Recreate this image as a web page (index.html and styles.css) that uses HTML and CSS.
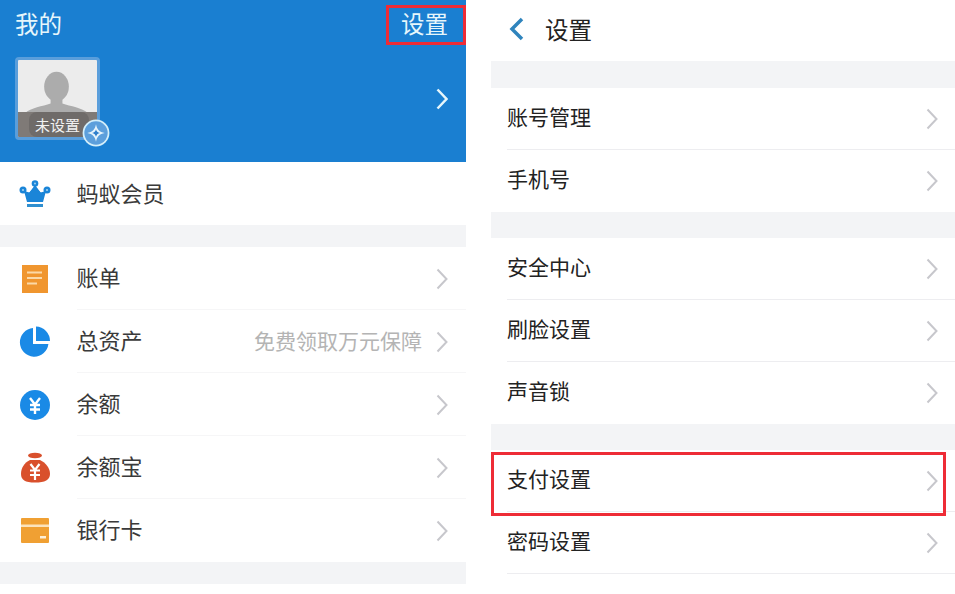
FILE: index.html
```html
<!DOCTYPE html>
<html lang="zh-CN">
  <head>
    <meta charset="UTF-8" />
    <meta name="viewport" content="width=device-width, initial-scale=1.0" />
    <title>我的 - 设置</title>
    <link rel="stylesheet" href="styles.css">
  </head>

  <body>
    <div class="pagina">
      <!-- Tela esquerda -->
      <section class="tela tela-minha">
        <header class="topo-azul">
          <div class="topo-linha">
            <span class="topo-titulo">我的</span>
            <span class="topo-link">设置</span>
          </div>
          <div class="perfil">
            <div class="avatar">
              <svg class="avatar-pessoa" viewBox="0 0 80 78">
                <ellipse cx="39" cy="27" rx="12.500" ry="15" fill="#acacac" />
                <path d="M33 38h12v6c8 3 20 4 26 10v24H7V54c6-6 18-7 26-10z" fill="#acacac" />
              </svg>
              <span class="avatar-faixa"><span class="avatar-texto">未设置</span></span>
            </div>
            <span class="selo">
              <svg viewBox="0 0 24 24" width="24" height="24">
                <circle cx="12" cy="12" r="11.500" fill="#d4effa" />
                <circle cx="12" cy="12" r="10" fill="#5c9fdc" />
                <path d="M12 4.500c.8 4.400 3 6.700 7.500 7.500-4.500.8-6.700 3-7.500 7.500-.8-4.500-3-6.700-7.500-7.500 4.500-.8 6.700-3 7.500-7.500z" fill="#e8f5fc" />
                <path d="M12 8.700c.4 1.800 1.500 2.900 3.300 3.300-1.800.4-2.900 1.500-3.300 3.300-.4-1.800-1.500-2.900-3.300-3.300 1.800-.4 2.900-1.500 3.300-3.300z" fill="#2f7fcc" />
              </svg>
            </span>
            <svg class="seta seta-branca" viewBox="0 0 12 22" width="12" height="22">
              <path d="M1.500 1.500l9 9.500-9 9.500" />
            </svg>
          </div>
        </header>

        <div class="linha linha-icone linha-membro">
          <svg class="icone" viewBox="0 0 32 28" width="32" height="28">
            <path d="M5 11l5.500 1.500L16 5l5.500 7.500L27 11l-3 11H8z" fill="#1a85d8" />
            <path d="M9.500 13.500L16 6l6.500 7.500L21 22H11z" fill="#1a85d8" />
            <circle cx="16" cy="3.500" r="3.300" fill="#1a85d8" />
            <circle cx="4" cy="10" r="3.500" fill="#1a85d8" />
            <circle cx="28" cy="10" r="3.500" fill="#1a85d8" />
            <circle cx="16" cy="3.500" r="1" fill="#9fd0f0" />
            <circle cx="4" cy="10" r="1.100" fill="#9fd0f0" />
            <circle cx="28" cy="10" r="1.100" fill="#9fd0f0" />
            <rect x="8" y="24" width="16" height="3" fill="#2f8fd0" />
          </svg>
          <span class="rotulo">蚂蚁会员</span>
        </div>

        <div class="faixa"></div>

        <div class="linha linha-icone com-borda">
          <svg class="icone" viewBox="0 0 32 32" width="32" height="32">
            <rect x="3" y="2" width="26" height="28" fill="#f0962f" />
            <path d="M8 9.500h15M8 15h15M8 20.500h10" stroke="#fbd9a8" stroke-width="2" />
          </svg>
          <span class="rotulo">账单</span>
          <svg class="seta" viewBox="0 0 12 22" width="12" height="22"><path d="M1.500 1.500l9 9.500-9 9.500" /></svg>
        </div>
        <div class="linha linha-icone com-borda">
          <svg class="icone" viewBox="0 0 32 32" width="32" height="32">
            <path d="M14 2.100A14.300 14.300 0 1 0 29.400 18H14z" fill="#1a8ae6" />
            <path d="M17 .5A14.500 14.500 0 0 1 31 15H17z" fill="#1a8ae6" />
          </svg>
          <span class="rotulo">总资产</span>
          <span class="dica">免费领取万元保障</span>
          <svg class="seta" viewBox="0 0 12 22" width="12" height="22"><path d="M1.500 1.500l9 9.500-9 9.500" /></svg>
        </div>
        <div class="linha linha-icone com-borda">
          <svg class="icone" viewBox="0 0 32 32" width="32" height="32">
            <circle cx="16" cy="16" r="15" fill="#1a8ae6" />
            <path d="M11 9l5 6.500L21 9M11 16h10M11 20.500h10M16 15.500V25" stroke="#fff" stroke-width="2.400" fill="none" />
          </svg>
          <span class="rotulo">余额</span>
          <svg class="seta" viewBox="0 0 12 22" width="12" height="22"><path d="M1.500 1.500l9 9.500-9 9.500" /></svg>
        </div>
        <div class="linha linha-icone com-borda">
          <svg class="icone" viewBox="0 0 32 32" width="32" height="32">
            <ellipse cx="16" cy="3.500" rx="7" ry="2.800" fill="#d9502c" />
            <path d="M11 8h10c6 3 10 8 10 14 0 6-5 8.500-15 8.500S2 28 2 22c0-6 3-11 9-14z" fill="#d9502c" />
            <path d="M11.500 12l4.500 6 4.500-6M11 18.500h10M11 23h10M16 18v10" stroke="#fff" stroke-width="2.200" fill="none" />
          </svg>
          <span class="rotulo">余额宝</span>
          <svg class="seta" viewBox="0 0 12 22" width="12" height="22"><path d="M1.500 1.500l9 9.500-9 9.500" /></svg>
        </div>
        <div class="linha linha-icone">
          <svg class="icone" viewBox="0 0 32 32" width="32" height="32">
            <rect x="2" y="3" width="28" height="25" rx="1" fill="#f0a033" />
            <rect x="2" y="9.500" width="28" height="2.500" fill="#fbe3bd" />
            <rect x="21" y="21" width="6" height="2.500" fill="#fdf0d8" />
          </svg>
          <span class="rotulo">银行卡</span>
          <svg class="seta" viewBox="0 0 12 22" width="12" height="22"><path d="M1.500 1.500l9 9.500-9 9.500" /></svg>
        </div>

        <div class="faixa"></div>
      </section>

      <!-- Tela direita -->
      <section class="tela tela-config">
        <header class="topo-branco">
          <svg class="voltar" viewBox="0 0 16 24" width="16" height="24">
            <path d="M13 2L3 12l10 10" />
          </svg>
          <span class="topo-nome">设置</span>
        </header>

        <div class="faixa faixa-alta"></div>
        <div class="linha linha-config com-borda"><span class="rotulo">账号管理</span><svg class="seta" viewBox="0 0 12 22" width="12" height="22"><path d="M1.500 1.500l9 9.500-9 9.500" /></svg></div>
        <div class="linha linha-config"><span class="rotulo">手机号</span><svg class="seta" viewBox="0 0 12 22" width="12" height="22"><path d="M1.500 1.500l9 9.500-9 9.500" /></svg></div>

        <div class="faixa faixa-media"></div>
        <div class="linha linha-config com-borda"><span class="rotulo">安全中心</span><svg class="seta" viewBox="0 0 12 22" width="12" height="22"><path d="M1.500 1.500l9 9.500-9 9.500" /></svg></div>
        <div class="linha linha-config com-borda"><span class="rotulo">刷脸设置</span><svg class="seta" viewBox="0 0 12 22" width="12" height="22"><path d="M1.500 1.500l9 9.500-9 9.500" /></svg></div>
        <div class="linha linha-config"><span class="rotulo">声音锁</span><svg class="seta" viewBox="0 0 12 22" width="12" height="22"><path d="M1.500 1.500l9 9.500-9 9.500" /></svg></div>

        <div class="faixa faixa-media"></div>
        <div class="linha linha-config destaque com-borda"><span class="rotulo">支付设置</span><svg class="seta" viewBox="0 0 12 22" width="12" height="22"><path d="M1.500 1.500l9 9.500-9 9.500" /></svg></div>
        <div class="linha linha-config com-borda"><span class="rotulo">密码设置</span><svg class="seta" viewBox="0 0 12 22" width="12" height="22"><path d="M1.500 1.500l9 9.500-9 9.500" /></svg></div>
      </section>
    </div>
  </body>
</html>
```

FILE: styles.css
```css
html,
body {
  margin: 0;
  padding: 0;
  background-color: #ffffff;
}

body {
  font-family: "Noto Sans CJK SC", "Liberation Sans", sans-serif;
  color: #3a3a3a;
  height: 594px;
  overflow: hidden;
}

.pagina {
  display: flex;
  gap: 25px;
}

.tela {
  display: flex;
  flex-direction: column;
}

.tela-minha {
  width: 466px;
}

.tela-config {
  width: 464px;
}

/* Topo azul */
.topo-azul {
  height: 162px;
  box-sizing: border-box;
  background-color: #1a7fd1;
  color: #e6f6fb;
}

.topo-linha {
  display: flex;
  justify-content: space-between;
  align-items: center;
  height: 45px;
  padding: 5px 0 0 15px;
  box-sizing: border-box;
}

.topo-titulo {
  font-size: 23.500px;
  line-height: 36px;
  margin-bottom: 4px;
}

.topo-link {
  font-size: 23.500px;
  line-height: 30px;
  width: 80px;
  height: 40px;
  box-sizing: border-box;
  border: 3px solid #ee2c36;
  padding-left: 12px;
}

.perfil {
  position: relative;
  display: flex;
  align-items: center;
  justify-content: space-between;
  margin-top: 12px;
  padding: 0 18px 0 15px;
}

.avatar {
  position: relative;
  width: 85px;
  height: 83px;
  box-sizing: border-box;
  border: 3px solid #5a9edb;
  border-radius: 4px;
  background-color: #ececec;
  overflow: hidden;
}

.avatar-pessoa {
  display: block;
  width: 79px;
  height: 77px;
}

.avatar-faixa {
  position: absolute;
  left: 0;
  right: 0;
  bottom: 0;
  height: 25px;
  line-height: 25px;
  background-color: #7f7a77;
  color: #f2f2f2;
  font-size: 15px;
}

.avatar-texto {
  display: block;
  width: 60px;
  margin-left: 11px;
  padding-left: 6px;
  box-sizing: border-box;
  background-color: #6f6b69;
  border-radius: 8px;
}

.selo {
  position: absolute;
  left: 82px;
  top: 62px;
  width: 28px;
  height: 28px;
}

.selo svg {
  display: block;
  width: 28px;
  height: 28px;
}

/* Linhas */
.linha {
  position: relative;
  display: flex;
  align-items: center;
  height: 63px;
  flex: none;
  box-sizing: border-box;
  font-size: 22px;
}

.linha-icone {
  padding-left: 19px;
  padding-right: 18px;
}

.linha-icone .icone {
  flex: none;
  margin-right: 25.500px;
}

.linha-icone.com-borda::after {
  content: "";
  position: absolute;
  left: 77px;
  right: 0;
  bottom: 0;
  border-bottom: 1px solid #f6f6f7;
}

.linha-config {
  height: 62px;
  padding: 0 17px 0 16px;
  font-size: 21px;
  color: #222222;
}

.linha-config.com-borda::after {
  content: "";
  position: absolute;
  left: 16px;
  right: 0;
  bottom: 0;
  border-bottom: 1px solid #ededf0;
}

.rotulo {
  flex: 1;
  line-height: 1.2;
  margin-bottom: 4px;
}

.linha-membro .rotulo {
  margin-bottom: 2px;
}

.dica {
  font-size: 21px;
  color: #b4b4b4;
  margin-right: 14px;
  margin-bottom: 4px;
}

.seta {
  flex: none;
  fill: none;
  stroke: #c7c7cc;
  stroke-width: 2;
}

.seta-branca {
  stroke: #e6f6fb;
  stroke-width: 2.500;
}

.faixa {
  height: 22px;
  flex: none;
  background-color: #f3f4f6;
}

.faixa-media {
  height: 26px;
}

.faixa-alta {
  height: 27px;
}

/* Topo branco */
.topo-branco {
  display: flex;
  align-items: center;
  height: 61px;
  box-sizing: border-box;
  padding: 0 0 3px 18px;
  color: #222222;
}

.voltar {
  fill: none;
  stroke: #2f84bd;
  stroke-width: 3.500;
  margin-right: 20px;
}

.topo-nome {
  font-size: 23.500px;
}

/* Caixa vermelha por cima da linha */
.destaque::before {
  content: "";
  position: absolute;
  left: 0;
  right: 9px;
  top: 2px;
  bottom: -4px;
  border: 3px solid #ee2c36;
  z-index: 1;
}
```
